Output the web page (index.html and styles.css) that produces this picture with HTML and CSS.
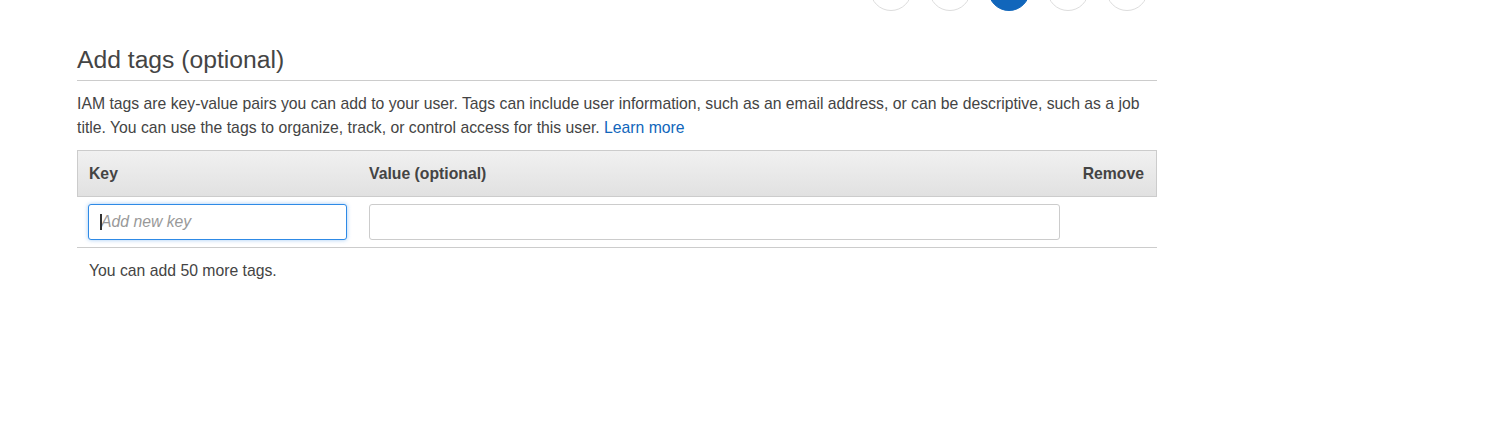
FILE: index.html
```html
<!DOCTYPE html>
<html lang="en">
<head>
<meta charset="utf-8">
<title>Add tags</title>
<link rel="stylesheet" href="styles.css">
</head>
<body>
<div class="page">
  <div class="stepper">
    <span class="step"></span>
    <span class="step"></span>
    <span class="step step-active"></span>
    <span class="step"></span>
    <span class="step"></span>
  </div>
  <h2 class="title">Add tags (optional)</h2>
  <p class="intro">IAM tags are key-value pairs you can add to your user. Tags can include user information, such as an email address, or can be descriptive, such as a job title. You can use the tags to organize, track, or control access for this user. <a class="link" href="#">Learn more</a></p>
  <div class="tags">
    <div class="tags-head">
      <div class="th th-key">Key</div>
      <div class="th th-value">Value (optional)</div>
      <div class="th th-remove">Remove</div>
    </div>
    <div class="tags-row">
      <div class="td td-key"><input class="field field-focus" type="text" placeholder="Add new key"><span class="caret"></span></div>
      <div class="td td-value"><input class="field" type="text"></div>
      <div class="td td-remove"></div>
    </div>
  </div>
  <p class="note">You can add 50 more tags.</p>
</div>
</body>
</html>
```
FILE: styles.css
```css
html, body {
  margin: 0;
  padding: 0;
  background: #fff;
}
body {
  font-family: "Liberation Sans", Arial, sans-serif;
  color: #444;
  font-size: 15.75px;
}
.page {
  width: 1080px;
  margin-left: 77px;
}
.stepper {
  height: 11px;
  display: flex;
  justify-content: flex-end;
  gap: 17px;
  padding-right: 9px;
  overflow: visible;
}
.step {
  flex: 0 0 auto;
  width: 40px;
  height: 40px;
  margin-top: -31px;
  border: 1px solid #dddddd;
  border-radius: 50%;
  background: #fff;
}
.step-active {
  background: #1166bb;
  border-color: #1166bb;
}
.title {
  margin: 34px 0 0;
  padding-bottom: 5px;
  font-size: 24.7px;
  line-height: 30px;
  font-weight: normal;
  color: #444;
  border-bottom: 1px solid #cccccc;
}
.intro {
  margin: 11px 0 0;
  line-height: 24px;
  color: #444;
}
.link {
  color: #1166bb;
  text-decoration: none;
}
.tags {
  margin-top: 10px;
}
.tags-head,
.tags-row {
  display: grid;
  grid-template-columns: 280px 1fr 85px;
}
.tags-head {
  height: 45px;
  align-items: center;
  border: 1px solid #cccccc;
  background: linear-gradient(#f1f1f1, #e1e1e1);
  font-weight: bold;
}
.th {
  padding: 0 11px;
}
.th-remove {
  text-align: right;
  padding-right: 12px;
}
.tags-row {
  padding: 7px 1px;
  border-bottom: 1px solid #cccccc;
}
.td-key {
  position: relative;
  padding: 0 11px 0 10px;
}
.td-value {
  padding: 0 11px;
}
.field {
  display: block;
  box-sizing: border-box;
  width: 100%;
  height: 36px;
  margin: 0;
  padding: 0 12px;
  border: 1px solid #cccccc;
  border-radius: 3px;
  background: #fff;
  font-family: "Liberation Sans", Arial, sans-serif;
  font-size: 15.75px;
  color: #444;
  outline: none;
}
.field::placeholder {
  color: #999;
  font-style: italic;
}
.field-focus {
  border-color: #2e8ae6;
  box-shadow: 0 0 4px rgba(46, 138, 230, 0.45);
}
.caret {
  position: absolute;
  left: 22px;
  top: 10px;
  width: 2px;
  height: 16px;
  background: #333;
}
.note {
  margin: 0;
  padding: 12px 12px 0;
  line-height: 22px;
  color: #444;
}
```
